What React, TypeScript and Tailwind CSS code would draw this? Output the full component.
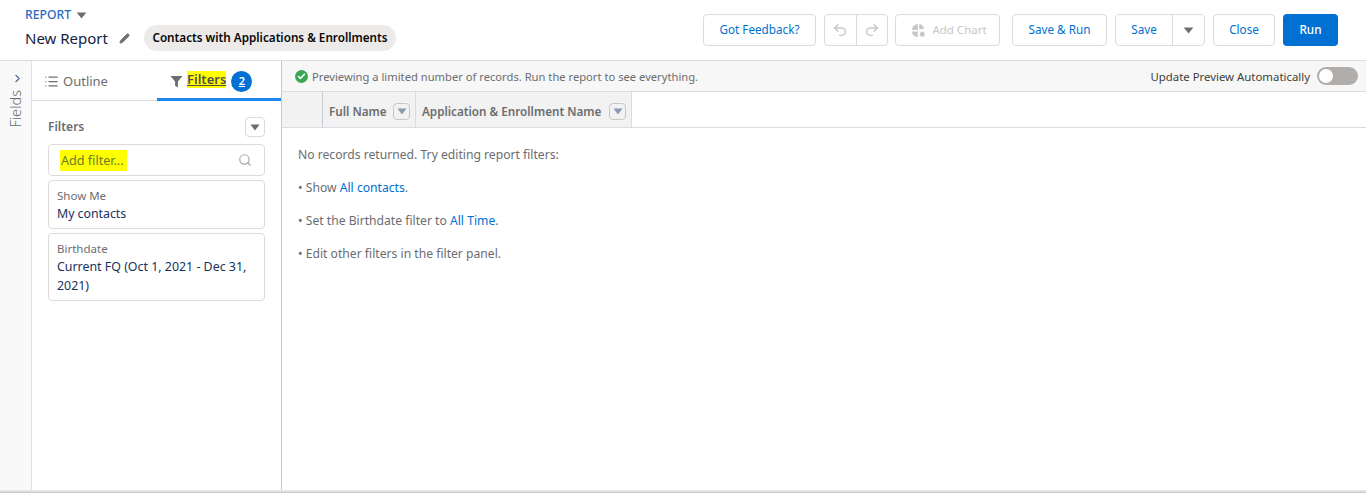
import { Check, ChevronRight, List, Pencil, Redo2, Search, Undo2 } from "lucide-react";

const Caret = ({ className = "" }: { className?: string }) => (
  <svg viewBox="0 0 12 8" className={className} fill="currentColor">
    <path d="M0.5 0.5h11L6 7.5z" />
  </svg>
);

const btn = "h-8 flex items-center justify-center rounded border border-[#dddbda] bg-white text-[11.7px] text-[#0070d2]";

const ColHead = ({ label, className }: { label: string; className: string }) => (
  <div className={`flex items-center border-r border-[#dddbda] pl-[6px] pt-[3px] ${className}`}>
    <span className="text-[11.7px] font-semibold text-[#6b6d70] whitespace-nowrap pt-[2px]">{label}</span>
    <span className="ml-auto mr-[5px] w-[17px] h-[17px] rounded-sm border border-[#c9c7c5] bg-[#f3f2f2] flex items-center justify-center text-[#8a9bb5]">
      <Caret className="w-[10px] h-[7px]" />
    </span>
  </div>
);

export default function App() {
  return (
    <div className="relative w-[1366px] h-[493px] overflow-hidden bg-white font-['Noto_Sans',sans-serif] text-[12px] text-[#3e3e3c] flex flex-col">
      <header className="h-[61px] shrink-0 border-b border-[#d8dde6] flex items-center pl-[25px] pr-[28px]">
        <div className="flex flex-col pt-[4px]">
          <div className="flex items-center gap-[5px] h-[14px] -mt-[5px]">
            <span className="text-[12.2px] leading-none font-medium text-[#2a6bc0]">REPORT</span>
            <Caret className="w-[11px] h-[7px] text-[#6b6d70]" />
          </div>
          <div className="flex items-center mt-[3px]">
            <span className="text-[15px] leading-[26px] text-[#14233f] w-[94px] whitespace-nowrap">New Report</span>
            <Pencil className="w-[11px] h-[11px] text-[#706e6b] fill-[#706e6b]" />
            <span className="ml-[14px] h-[26px] w-[252px] rounded-full bg-[#ecebea] flex items-center justify-center text-[11.7px] font-semibold text-[#080707] whitespace-nowrap">
              Contacts with Applications &amp; Enrollments
            </span>
          </div>
        </div>
        <div className="ml-auto flex items-center">
          <div className={`${btn} w-[113px]`}>Got Feedback?</div>
          <div className="ml-[8px] h-8 w-[64px] flex rounded border border-[#dddbda] text-[#c9c7c5]">
            <div className="flex-1 flex items-center justify-center border-r border-[#dddbda]"><Undo2 className="w-[16px] h-[16px]" /></div>
            <div className="flex-1 flex items-center justify-center"><Redo2 className="w-[16px] h-[16px]" /></div>
          </div>
          <div className={`${btn} ml-[7px] w-[105px] gap-[6px] pl-[3px] !text-[#c9c7c5] !text-[11.5px]`}>
            <svg viewBox="0 0 16 16" className="w-[15px] h-[15px]" fill="currentColor">
              <path d="M7.3 1v6.5H1A6.5 6.5 0 0 1 7.3 1zM8.7 1A6.5 6.5 0 0 1 14 6.5H8.7zM1 9h6.3v5.8A6.5 6.5 0 0 1 1 9z" />
              <circle cx="12" cy="12" r="3.2" stroke="white" strokeWidth="1" />
            </svg>
            Add Chart
          </div>
          <div className={`${btn} ml-[12px] w-[95px]`}>Save &amp; Run</div>
          <div className="ml-[8px] h-8 w-[90px] flex rounded border border-[#dddbda] text-[11.7px] text-[#0070d2]">
            <div className="w-[57px] flex items-center justify-center border-r border-[#dddbda]">Save</div>
            <div className="flex-1 flex items-center justify-center text-[#6b6d70]"><Caret className="w-[11px] h-[7px]" /></div>
          </div>
          <div className={`${btn} ml-[8px] w-[62px]`}>Close</div>
          <div className="ml-[8px] h-8 w-[55px] rounded bg-[#0070d2] text-white text-[11.7px] font-medium flex items-center justify-center">Run</div>
        </div>
      </header>

      <div className="flex-1 flex min-h-0">
        <aside className="w-[32px] shrink-0 bg-[#f9f9f9] border-r border-[#e2e2e2] flex flex-col items-center pt-[11px]">
          <ChevronRight className="w-[13px] h-[13px] text-[#54698d] ml-[3px]" />
          <span className="mt-[5px] text-[14.5px] leading-none font-light text-[#6b6d70] [writing-mode:vertical-rl] rotate-180">Fields</span>
        </aside>

        <section className="w-[250px] shrink-0 border-r border-[#c5ccd6] flex flex-col">
          <div className="h-[40px] flex border-b border-[#dddbda]">
            <div className="w-[125px] flex items-center pl-[12px] gap-[4px] text-[13px] text-[#6b6d70] pt-[2px]">
              <List className="w-[15px] h-[15px]" />
              Outline
            </div>
            <div className="w-[124px] -mb-px h-[40px] border-b-[3px] border-[#1b86ee] flex items-center pl-[13px] pt-[3px]">
              <svg viewBox="0 0 14 14" className="w-[13px] h-[13px] text-[#6b6d70] mr-[4px]" fill="currentColor">
                <path d="M0.5 1h13L8.5 7v6.5l-3-2V7z" />
              </svg>
              <span className="bg-[#ffff00] text-[13px] leading-[17px] font-semibold underline text-[#514f4d] -mt-[3px] h-[17px]">Filters</span>
              <span className="ml-[5px] w-[21px] h-[21px] rounded-full bg-[#0070d2] text-white text-[11px] font-semibold underline flex items-center justify-center">2</span>
            </div>
          </div>
          <div className="px-[16px]">
            <div className="flex items-center justify-between mt-[16px] h-[20px]">
              <span className="text-[12px] font-semibold text-[#6b6d70]">Filters</span>
              <span className="w-5 h-5 rounded border border-[#dddbda] flex items-center justify-center text-[#6b6d70]">
                <Caret className="w-[10px] h-[7px]" />
              </span>
            </div>
            <div className="mt-[7px] h-8 rounded border border-[#dddbda] flex items-center pl-[11px] pr-[12px]">
              <span className="bg-[#ffff00] text-[12.6px] leading-[20px] text-[#6b7a2b] px-px w-[67px] whitespace-nowrap pt-px">Add filter...</span>
              <Search className="ml-auto w-[14px] h-[14px] text-[#a8a7a5]" />
            </div>
            <div className="mt-[4px] h-[49px] rounded border border-[#dddbda] px-[8px] pt-[6px]">
              <div className="text-[11.5px] leading-[17px] text-[#6b6d70]">Show Me</div>
              <div className="text-[12.3px] leading-[19px] text-[#16325c]">My contacts</div>
            </div>
            <div className="mt-[4px] h-[68px] rounded border border-[#dddbda] px-[8px] pt-[6px]">
              <div className="text-[11.5px] leading-[17px] text-[#6b6d70]">Birthdate</div>
              <div className="text-[12.4px] leading-[19px] text-[#16325c]">Current FQ (Oct 1, 2021 - Dec 31, 2021)</div>
            </div>
          </div>
        </section>

        <main className="flex-1 flex flex-col min-w-0">
          <div className="h-[31px] shrink-0 bg-[#f7f7f7] border-b border-[#dddbda] flex items-center pl-[13px] pr-[8px]">
            <span className="w-[13px] h-[13px] rounded-full bg-[#3ba755] flex items-center justify-center">
              <Check className="w-[9px] h-[9px] text-white" strokeWidth={4} />
            </span>
            <span className="ml-[4px] text-[11.2px] text-[#6b6d70] whitespace-nowrap pt-[2px]">Previewing a limited number of records. Run the report to see everything.</span>
            <span className="ml-auto text-[11.4px] text-[#3e3e3c] whitespace-nowrap pt-[2px]">Update Preview Automatically</span>
            <span className="ml-[7px] w-[41px] h-[18px] rounded-full bg-[#b0adab] flex items-center pl-[2px]">
              <span className="w-[14px] h-[14px] rounded-full bg-white" />
            </span>
          </div>
          <div className="h-[36px] shrink-0 border-b border-[#d8dde6] flex">
            <div className="w-[41px] bg-[#f3f2f2] border-r border-[#c5ccd6]" />
            <ColHead label="Full Name" className="w-[93px] bg-[#f3f2f2]" />
            <ColHead label="Application & Enrollment Name" className="w-[216px] bg-[#f3f2f2]" />
          </div>
          <div className="pl-[16px] pt-[18px] text-[12.15px] leading-[17px] text-[#6b6d70] flex flex-col gap-[16px]">
            <p>No records returned. Try editing report filters:</p>
            <p>• Show <span className="text-[#0070d2]">All contacts</span>.</p>
            <p>• Set the Birthdate filter to <span className="text-[#0070d2]">All Time</span>.</p>
            <p>• Edit other filters in the filter panel.</p>
          </div>
        </main>
      </div>
      <div className="absolute left-0 right-0 bottom-0 h-[3px] bg-gradient-to-b from-[#f2f2f2] to-[#c4c4c4]" />
    </div>
  );
}
